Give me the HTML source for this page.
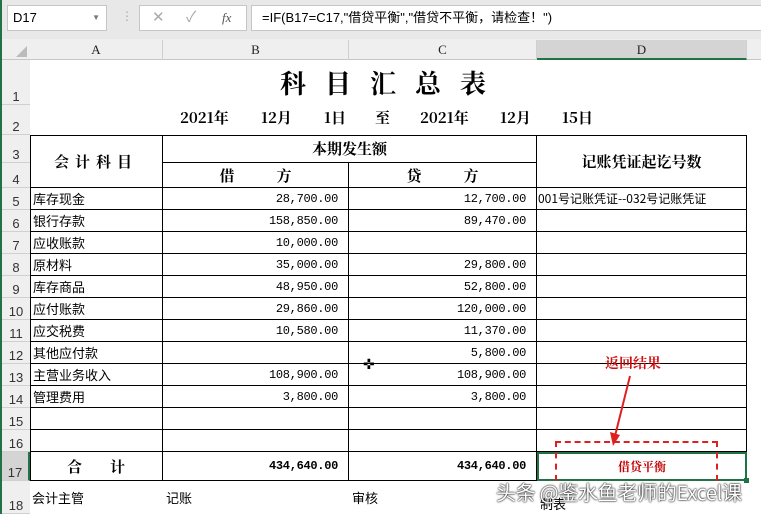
<!DOCTYPE html><html><head><meta charset="utf-8"><style>
*{margin:0;padding:0;box-sizing:border-box}
body{width:761px;height:514px;overflow:hidden;background:#fff;position:relative;font-family:"Liberation Sans","Noto Sans CJK SC",sans-serif;font-size:12px;color:#000}
.a{position:absolute}
.h{position:absolute;border-right:1px solid #d0d0d0;text-align:center;font-family:"Liberation Serif","Noto Sans CJK SC",serif;font-size:13px;color:#222;line-height:20px}
.rn{position:absolute;left:2px;width:28px;border-bottom:1px solid #d0d0d0;background:#efefef;font-size:13px;color:#333;text-align:center;display:flex;align-items:flex-end;justify-content:center}
.c{position:absolute;border-right:1px solid #000;border-bottom:1px solid #000;display:flex;align-items:center;white-space:nowrap;overflow:hidden}
.t{padding-left:3px;font-size:13px;font-family:"Noto Sans CJK SC",sans-serif}
.n{justify-content:flex-end;padding-right:10px;font-family:"Liberation Mono",monospace;font-size:12px;letter-spacing:-0.3px}
.b{font-weight:bold;font-family:"Noto Serif CJK SC",serif}
</style></head><body>
<div class="a" style="left:0;top:0;width:761px;height:39px;background:#e8e8e8"></div>
<div class="a" style="left:0;top:0;width:2px;height:514px;background:#217346"></div>
<div class="a" style="left:7px;top:5px;width:100px;height:26px;background:#fff;border:1px solid #c6c6c6;font-size:13px;line-height:24px;padding-left:5px">D17<span style="position:absolute;right:6px;top:0;font-size:8px;color:#777">▼</span></div>
<div class="a" style="left:121px;top:9px;color:#aaa;font-size:12px">⋮</div>
<div class="a" style="left:139px;top:5px;width:108px;height:26px;background:#fff;border:1px solid #c6c6c6;color:#aaa;font-size:15px;line-height:24px"><span style="position:absolute;left:12px">✕</span><span style="position:absolute;left:46px">✓</span><span style="position:absolute;left:82px;font-family:'Liberation Serif',serif;font-style:italic;color:#555;font-size:13px">fx</span></div>
<div class="a" style="left:251px;top:5px;width:512px;height:26px;background:#fff;border:1px solid #c6c6c6;font-size:13px;line-height:24px;padding-left:10px;font-family:'Liberation Sans','Noto Sans CJK SC',sans-serif">=IF(B17=C17,"借贷平衡","借贷不平衡，请检查！")</div>
<div class="a" style="left:2px;top:39px;width:759px;height:21px;background:#efefef;border-bottom:1px solid #c6c6c6"></div>
<div class="a" style="left:16px;top:46px;width:0;height:0;border-left:11px solid transparent;border-bottom:11px solid #bbb"></div>
<div class="h" style="left:30px;top:40px;width:133px">A</div>
<div class="h" style="left:163px;top:40px;width:186px">B</div>
<div class="h" style="left:349px;top:40px;width:188px">C</div>
<div class="h" style="left:537px;top:40px;width:210px;background:#d4d4d4;border-bottom:2px solid #217346;height:20px">D</div>
<div class="a" style="left:2px;top:60px;width:28px;height:454px;background:#efefef;border-right:1px solid #c6c6c6"></div>
<div class="rn" style="top:60px;height:45px">1</div>
<div class="rn" style="top:105px;height:30px">2</div>
<div class="rn" style="top:135px;height:28px">3</div>
<div class="rn" style="top:163px;height:25px">4</div>
<div class="rn" style="top:188px;height:22px">5</div>
<div class="rn" style="top:210px;height:22px">6</div>
<div class="rn" style="top:232px;height:22px">7</div>
<div class="rn" style="top:254px;height:22px">8</div>
<div class="rn" style="top:276px;height:22px">9</div>
<div class="rn" style="top:298px;height:22px">10</div>
<div class="rn" style="top:320px;height:22px">11</div>
<div class="rn" style="top:342px;height:22px">12</div>
<div class="rn" style="top:364px;height:22px">13</div>
<div class="rn" style="top:386px;height:22px">14</div>
<div class="rn" style="top:408px;height:22px">15</div>
<div class="rn" style="top:430px;height:22px">16</div>
<div class="rn" style="top:452px;height:29px;background:#d4d4d4;border-right:2px solid #217346">17</div>
<div class="rn" style="top:481px;height:33px">18</div>
<div class="a b" style="left:280px;top:64px;font-size:26px;letter-spacing:19px">科目汇总表</div>
<div class="a b" style="left:180px;top:107px;font-size:15px">2021年</div>
<div class="a b" style="left:261px;top:107px;font-size:15px">12月</div>
<div class="a b" style="left:324px;top:107px;font-size:15px">1日</div>
<div class="a b" style="left:375px;top:107px;font-size:15px">至</div>
<div class="a b" style="left:420px;top:107px;font-size:15px">2021年</div>
<div class="a b" style="left:500px;top:107px;font-size:15px">12月</div>
<div class="a b" style="left:562px;top:107px;font-size:15px">15日</div>
<div class="a" style="left:30px;top:135px;width:717px;height:1px;background:#000"></div>
<div class="a" style="left:30px;top:135px;width:1px;height:346px;background:#000"></div>
<div class="c b" style="left:30px;top:135px;width:133px;height:53px;justify-content:center;font-size:15px;letter-spacing:6px">会计科目</div>
<div class="c b" style="left:163px;top:135px;width:374px;height:28px;justify-content:center;font-size:15px">本期发生额</div>
<div class="c b" style="left:163px;top:163px;width:186px;height:25px;justify-content:center;font-size:15px"><span>借</span><span style="margin-left:42px">方</span></div>
<div class="c b" style="left:349px;top:163px;width:188px;height:25px;justify-content:center;font-size:15px"><span>贷</span><span style="margin-left:42px">方</span></div>
<div class="c b" style="left:537px;top:135px;width:210px;height:53px;justify-content:center;font-size:15px">记账凭证起讫号数</div>
<div class="c t" style="left:30px;top:188px;width:133px;height:22px">库存现金</div><div class="c n" style="left:163px;top:188px;width:186px;height:22px">28,700.00</div><div class="c n" style="left:349px;top:188px;width:188px;height:22px">12,700.00</div><div class="c t" style="left:537px;top:188px;width:210px;height:22px;padding-left:1px;font-size:12px">001号记账凭证--032号记账凭证</div>
<div class="c t" style="left:30px;top:210px;width:133px;height:22px">银行存款</div><div class="c n" style="left:163px;top:210px;width:186px;height:22px">158,850.00</div><div class="c n" style="left:349px;top:210px;width:188px;height:22px">89,470.00</div><div class="c" style="left:537px;top:210px;width:210px;height:22px"></div>
<div class="c t" style="left:30px;top:232px;width:133px;height:22px">应收账款</div><div class="c n" style="left:163px;top:232px;width:186px;height:22px">10,000.00</div><div class="c n" style="left:349px;top:232px;width:188px;height:22px"></div><div class="c" style="left:537px;top:232px;width:210px;height:22px"></div>
<div class="c t" style="left:30px;top:254px;width:133px;height:22px">原材料</div><div class="c n" style="left:163px;top:254px;width:186px;height:22px">35,000.00</div><div class="c n" style="left:349px;top:254px;width:188px;height:22px">29,800.00</div><div class="c" style="left:537px;top:254px;width:210px;height:22px"></div>
<div class="c t" style="left:30px;top:276px;width:133px;height:22px">库存商品</div><div class="c n" style="left:163px;top:276px;width:186px;height:22px">48,950.00</div><div class="c n" style="left:349px;top:276px;width:188px;height:22px">52,800.00</div><div class="c" style="left:537px;top:276px;width:210px;height:22px"></div>
<div class="c t" style="left:30px;top:298px;width:133px;height:22px">应付账款</div><div class="c n" style="left:163px;top:298px;width:186px;height:22px">29,860.00</div><div class="c n" style="left:349px;top:298px;width:188px;height:22px">120,000.00</div><div class="c" style="left:537px;top:298px;width:210px;height:22px"></div>
<div class="c t" style="left:30px;top:320px;width:133px;height:22px">应交税费</div><div class="c n" style="left:163px;top:320px;width:186px;height:22px">10,580.00</div><div class="c n" style="left:349px;top:320px;width:188px;height:22px">11,370.00</div><div class="c" style="left:537px;top:320px;width:210px;height:22px"></div>
<div class="c t" style="left:30px;top:342px;width:133px;height:22px">其他应付款</div><div class="c n" style="left:163px;top:342px;width:186px;height:22px"></div><div class="c n" style="left:349px;top:342px;width:188px;height:22px">5,800.00</div><div class="c" style="left:537px;top:342px;width:210px;height:22px"></div>
<div class="c t" style="left:30px;top:364px;width:133px;height:22px">主营业务收入</div><div class="c n" style="left:163px;top:364px;width:186px;height:22px">108,900.00</div><div class="c n" style="left:349px;top:364px;width:188px;height:22px">108,900.00</div><div class="c" style="left:537px;top:364px;width:210px;height:22px"></div>
<div class="c t" style="left:30px;top:386px;width:133px;height:22px">管理费用</div><div class="c n" style="left:163px;top:386px;width:186px;height:22px">3,800.00</div><div class="c n" style="left:349px;top:386px;width:188px;height:22px">3,800.00</div><div class="c" style="left:537px;top:386px;width:210px;height:22px"></div>
<div class="c" style="left:30px;top:408px;width:133px;height:22px"></div><div class="c" style="left:163px;top:408px;width:186px;height:22px"></div><div class="c" style="left:349px;top:408px;width:188px;height:22px"></div><div class="c" style="left:537px;top:408px;width:210px;height:22px"></div>
<div class="c" style="left:30px;top:430px;width:133px;height:22px"></div><div class="c" style="left:163px;top:430px;width:186px;height:22px"></div><div class="c" style="left:349px;top:430px;width:188px;height:22px"></div><div class="c" style="left:537px;top:430px;width:210px;height:22px"></div>
<div class="c b" style="left:30px;top:452px;width:133px;height:29px;justify-content:center;font-size:15px"><span>合</span><span style="margin-left:28px">计</span></div>
<div class="c n" style="left:163px;top:452px;width:186px;height:29px;font-weight:bold">434,640.00</div>
<div class="c n" style="left:349px;top:452px;width:188px;height:29px;font-weight:bold">434,640.00</div>
<div class="c b" style="left:537px;top:452px;width:210px;height:29px;justify-content:center;color:#c00000;font-size:12px;border:2px solid #217346">借贷平衡</div>
<div class="a" style="left:744px;top:478px;width:5px;height:5px;background:#217346"></div>
<div class="a" style="left:555px;top:441px;width:163px;height:40px;border:2px dashed #e02020;border-bottom:none"></div>
<div class="a b" style="left:605px;top:353px;color:#d01010;font-size:14px">返回结果</div>
<svg class="a" style="left:600px;top:370px" width="40" height="80"><line x1="30" y1="6" x2="15" y2="66" stroke="#e02020" stroke-width="2"/><polygon points="10,62 20,65 13,76" fill="#e02020"/></svg>
<div class="a" style="left:363px;top:356px;font-size:14px">✜</div>
<div class="a t" style="left:32px;top:488px;font-size:13px;padding:0">会计主管</div>
<div class="a t" style="left:166px;top:488px;font-size:13px;padding:0">记账</div>
<div class="a t" style="left:352px;top:488px;font-size:13px;padding:0">审核</div>
<div class="a t" style="left:540px;top:494px;font-size:13px;padding:0">制表</div>
<div class="a" style="left:496px;top:477px;font-size:20px;color:#fff;text-shadow:0 0 2px #000,0 0 1px #000;font-family:'Noto Sans CJK SC',sans-serif;letter-spacing:-0.3px">头条 @鉴水鱼老师的Excel课</div>
</body></html>
